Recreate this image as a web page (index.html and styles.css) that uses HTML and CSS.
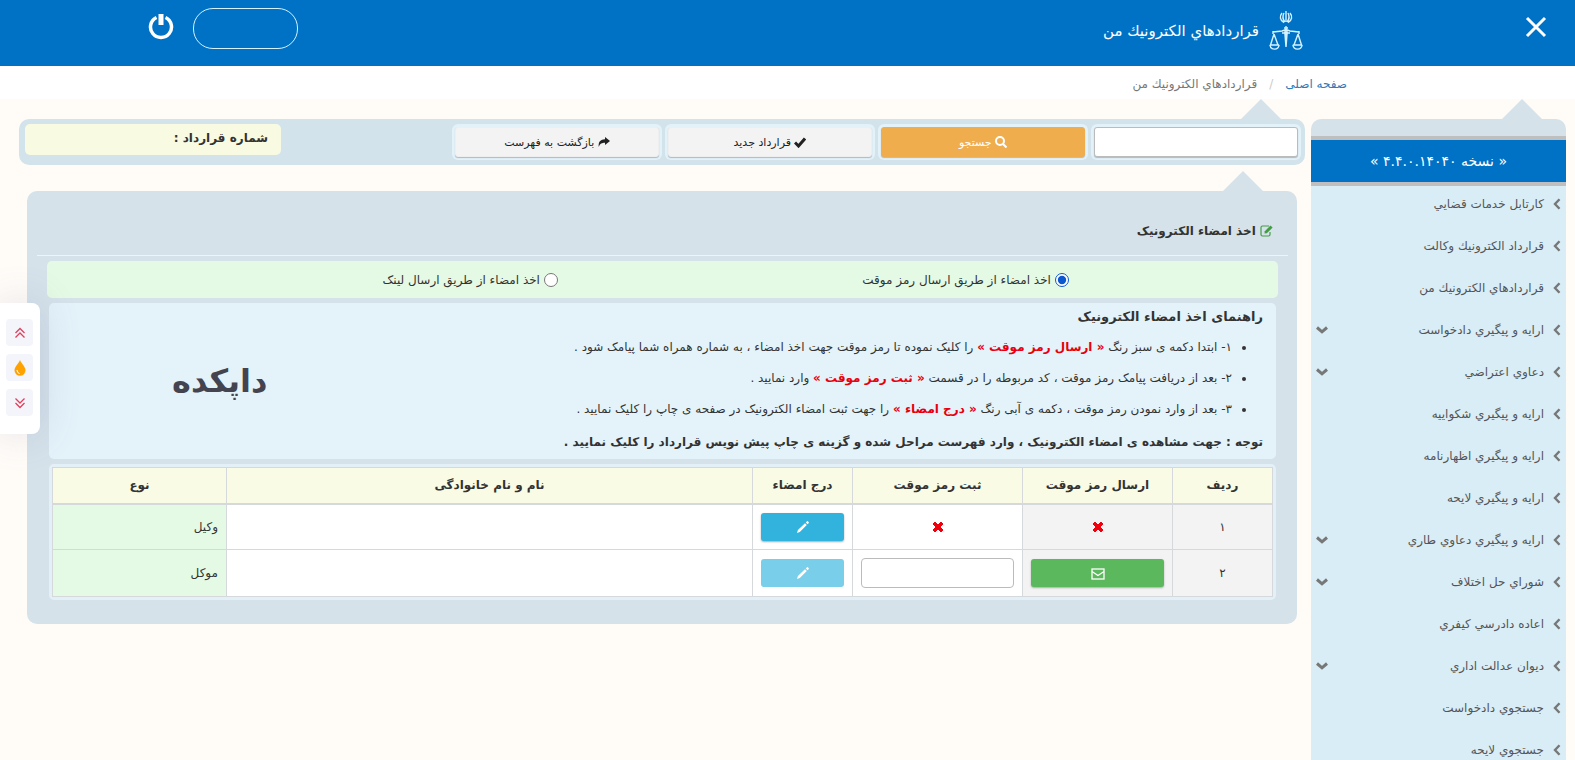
FILE: index.html
```html
<!DOCTYPE html>
<html lang="fa" dir="rtl">
<head>
    <meta charset="UTF-8">
    <meta name="viewport" content="width=device-width, initial-scale=1.0">
    <title>قراردادهاي الكترونيك من</title>
    <link rel="stylesheet" href="styles.css">
</head>
<body>
    <svg class="sprite" aria-hidden="true">
        <symbol id="chevron" viewBox="0 0 8 12"><path d="M6.5 1.2L2 6l4.5 4.8" fill="none" stroke="currentColor" stroke-width="2.4"/></symbol>
        <symbol id="arrow-down" viewBox="0 0 12 8"><path d="M1 1.5l5 4.3 5-4.3" fill="none" stroke="currentColor" stroke-width="3"/></symbol>
        <symbol id="times" viewBox="0 0 12 12"><path d="M3 1L6 4l3-3 2 2-3 3 3 3-2 2-3-3-3 3-2-2 3-3-3-3z" fill="currentColor" stroke="currentColor" stroke-width="1" stroke-linejoin="round"/></symbol>
        <symbol id="pencil" viewBox="0 0 14 14"><path d="M1 13l.9-3L9 3.200 10.800 5l-7 7.100zM9.800 2.400l1-1c.4-.4.8-.4 1.200 0l.6.6c.4.4.4.8 0 1.200l-1 1z" fill="currentColor"/></symbol>
    </svg>

    <header class="topbar">
        <button class="icon-btn close-menu" type="button" aria-label="بستن منو">
            <svg width="22" height="22" viewBox="0 0 22 22"><path d="M2 2l18 18M20 2L2 20" stroke="#fff" stroke-width="3"/></svg>
        </button>
        <div class="brand">
            <svg width="34" height="40" viewBox="0 0 34 40" fill="none" stroke="#d5f2ff" stroke-width="1.4">
                <path d="M17 0v11M15 2c-1.6 3-1.5 6 .8 9M19 2c1.6 3 1.5 6-.8 9M13 2c-2.600 3-2.200 7.500 2 9.500M21 2c2.600 3 2.200 7.500-2 9.500"/>
                <path d="M15.800 21h2.400L17 36z" fill="#d5f2ff"/>
                <path d="M17 15v8M15 17h4M4 21l9-1 4-1.500 4 1.500 9 1M4 20v3M30 20v3M13 22h8"/>
                <path d="M5 23L1.500 34M5 23l4 11M29 23l-4 11M29 23l3.500 11M.8 34h9.400M23.800 34h9.400"/>
                <path d="M1 34c.5 5.500 8.500 5.500 9 0M24 34c.5 5.500 8.500 5.500 9 0"/>
            </svg>
            <h1>قراردادهاي الكترونيك من</h1>
        </div>
        <div class="account">
            <div class="user-box"></div>
            <button class="icon-btn" type="button" aria-label="خروج">
                <svg width="26" height="26" viewBox="0 0 26 26" fill="none" stroke="#fff"><path d="M8.500 3.500a10.500 10.500 0 1 0 9 0" stroke-width="3.500"/><path d="M13 0v11" stroke-width="5"/></svg>
            </button>
        </div>
    </header>

    <nav class="breadcrumb">
        <a href="#">صفحه اصلی</a>
        <span class="sep">/</span>
        <span>قراردادهاي الكترونيك من</span>
    </nav>

    <div class="page">
        <aside class="sidebar pointer">
            <p class="version">« نسخه ۴.۴.۰.۱۴۰۴۰ »</p>
            <ul class="menu">
                <li><a href="#"><svg class="chev"><use href="#chevron"/></svg>كارتابل خدمات قضايي</a></li>
                <li><a href="#"><svg class="chev"><use href="#chevron"/></svg>قرارداد الكترونيك وكالت</a></li>
                <li><a href="#"><svg class="chev"><use href="#chevron"/></svg>قراردادهاي الكترونيك من</a></li>
                <li><a href="#"><svg class="chev"><use href="#chevron"/></svg>ارايه و پيگيري دادخواست<svg class="down"><use href="#arrow-down"/></svg></a></li>
                <li><a href="#"><svg class="chev"><use href="#chevron"/></svg>دعاوي اعتراضي<svg class="down"><use href="#arrow-down"/></svg></a></li>
                <li><a href="#"><svg class="chev"><use href="#chevron"/></svg>ارايه و پيگيري شكواييه</a></li>
                <li><a href="#"><svg class="chev"><use href="#chevron"/></svg>ارايه و پيگيري اظهارنامه</a></li>
                <li><a href="#"><svg class="chev"><use href="#chevron"/></svg>ارايه و پيگيري لايحه</a></li>
                <li><a href="#"><svg class="chev"><use href="#chevron"/></svg>ارايه و پيگيري دعاوي طاري<svg class="down"><use href="#arrow-down"/></svg></a></li>
                <li><a href="#"><svg class="chev"><use href="#chevron"/></svg>شوراي حل اختلاف<svg class="down"><use href="#arrow-down"/></svg></a></li>
                <li><a href="#"><svg class="chev"><use href="#chevron"/></svg>اعاده دادرسي كيفري</a></li>
                <li><a href="#"><svg class="chev"><use href="#chevron"/></svg>ديوان عدالت اداري<svg class="down"><use href="#arrow-down"/></svg></a></li>
                <li><a href="#"><svg class="chev"><use href="#chevron"/></svg>جستجوي دادخواست</a></li>
                <li><a href="#"><svg class="chev"><use href="#chevron"/></svg>جستجوي لايحه</a></li>
            </ul>
        </aside>

        <main>
            <form class="toolbar pointer">
                <input class="tool" type="text" aria-label="شماره قرارداد">
                <button class="tool search" type="button">
                    <svg width="12" height="12" viewBox="0 0 12 12" fill="none" stroke="currentColor" stroke-width="2"><circle cx="5" cy="5" r="4"/><path d="M8 8l3.500 3.500"/></svg>
                    جستجو
                </button>
                <button class="tool" type="button">
                    <svg width="12" height="12" viewBox="0 0 12 12"><path d="M1 6.500l3.500 3.500L11 2.500" fill="none" stroke="currentColor" stroke-width="3"/></svg>
                    قرارداد جدید
                </button>
                <button class="tool" type="button">
                    <svg width="12" height="12" viewBox="0 0 12 12"><path d="M7 1l5 4-5 4V6.800C4 6.800 2 7.500.8 11 0 6 2.500 3.400 7 3.300z" fill="currentColor"/></svg>
                    بازگشت به فهرست
                </button>
                <p class="contract-no">شماره قرارداد :</p>
            </form>

            <section class="panel pointer">
                <h2>
                    <svg width="13" height="12" viewBox="0 0 13 12"><path d="M9 1H2.500Q1 1 1 2.500v7Q1 11 2.500 11h6Q10 11 10 9.500V7" fill="none" stroke="#449d44" stroke-width="1.200"/><path d="M4.500 8.500l.3-2.200L10.500.6 12.600 2.600 6.800 8.300z" fill="#449d44"/></svg>
                    اخذ امضاء الکترونیک
                </h2>

                <div class="methods">
                    <label><input type="radio" name="method" checked>اخذ امضاء از طریق ارسال رمز موقت</label>
                    <label><input type="radio" name="method">اخذ امضاء از طریق ارسال لینک</label>
                </div>

                <div class="guide">
                    <div>
                        <h3>راهنمای اخذ امضاء الکترونیک</h3>
                        <ul>
                            <li>۱- ابتدا دکمه ی سبز رنگ <strong>« ارسال رمز موقت »</strong> را کلیک نموده تا رمز موقت جهت اخذ امضاء ، به شماره همراه شما پیامک شود .</li>
                            <li>۲- بعد از دریافت پیامک رمز موقت ، کد مربوطه را در قسمت <strong>« ثبت رمز موقت »</strong> وارد نمایید .</li>
                            <li>۳- بعد از وارد نمودن رمز موقت ، دکمه ی آبی رنگ <strong>« درج امضاء »</strong> را جهت ثبت امضاء الکترونیک در صفحه ی چاپ را کلیک نمایید .</li>
                        </ul>
                        <p class="note">توجه : جهت مشاهده ی امضاء الکترونیک ، وارد فهرست مراحل شده و گزینه ی چاپ پیش نویس قرارداد را کلیک نمایید .</p>
                    </div>
                    <div class="watermark">داپکده</div>
                </div>

                <div class="table-box">
                    <table>
                        <thead>
                            <tr>
                                <th class="col-row">ردیف</th>
                                <th class="col-send">ارسال رمز موقت</th>
                                <th class="col-code">ثبت رمز موقت</th>
                                <th class="col-sign">درج امضاء</th>
                                <th>نام و نام خانوادگی</th>
                                <th class="col-type">نوع</th>
                            </tr>
                        </thead>
                        <tbody>
                            <tr>
                                <td class="gray">۱</td>
                                <td class="gray"><svg class="times"><use href="#times"/></svg></td>
                                <td><svg class="times"><use href="#times"/></svg></td>
                                <td><button class="btn btn-info" type="button" aria-label="درج امضاء"><svg class="pencil"><use href="#pencil"/></svg></button></td>
                                <td></td>
                                <td class="type">وکیل</td>
                            </tr>
                            <tr>
                                <td class="gray">۲</td>
                                <td class="gray"><button class="btn btn-success" type="button" aria-label="ارسال رمز موقت"><svg width="14" height="12" viewBox="0 0 14 12" fill="none" stroke="#fff" stroke-width="1.300"><rect x="1" y="1" width="12" height="10"/><path d="M1 3.500l6 4 6-4"/></svg></button></td>
                                <td><input class="code" type="text" aria-label="ثبت رمز موقت"></td>
                                <td><button class="btn btn-info" type="button" aria-label="درج امضاء" disabled><svg class="pencil"><use href="#pencil"/></svg></button></td>
                                <td></td>
                                <td class="type">موکل</td>
                            </tr>
                        </tbody>
                    </table>
                </div>
            </section>
        </main>
    </div>

    <div class="float-tools">
        <button type="button" aria-label="بالا"><svg width="12" height="12" viewBox="0 0 12 12" fill="none" stroke="#e0405e" stroke-width="1.300"><path d="M1.500 6L6 1.500 10.500 6M1.500 10.500L6 6l4.500 4.500"/></svg></button>
        <button type="button" aria-label="رنگ"><svg width="12" height="16" viewBox="0 0 12 16"><path d="M6 0c1.500 4 5.500 6.500 5.500 10.300a5.500 5.500 0 0 1-11 0C.5 6.500 4.500 4 6 0z" fill="#ffa200"/><path d="M3 10q0 3 2.500 3.500" fill="none" stroke="#fff" stroke-width="1"/></svg></button>
        <button type="button" aria-label="پایین"><svg width="12" height="12" viewBox="0 0 12 12" fill="none" stroke="#e0405e" stroke-width="1.300"><path d="M1.500 1.500L6 6l4.500-4.500M1.500 6L6 10.500 10.500 6"/></svg></button>
    </div>
</body>
</html>
```
FILE: styles.css
```css
* {
    box-sizing: border-box;
}

body {
    margin: 0;
    background: #fffcf8;
    color: #333;
    font-family: "DejaVu Sans", sans-serif;
    font-size: 12px;
    line-height: 20px;
}

h1, h2, h3, p, ul {
    margin: 0;
    padding: 0;
}

a {
    text-decoration: none;
}

button, input {
    font-family: inherit;
    font-size: inherit;
}

.sprite {
    display: none;
}

/* top bar */
.topbar {
    display: flex;
    align-items: flex-start;
    height: 66px;
    padding: 8px 28px 0 148px;
    background: #0072c6;
    color: #fff;
}

.icon-btn {
    padding: 0;
    border: 0;
    background: none;
    cursor: pointer;
}

.icon-btn svg {
    display: block;
}

.close-menu {
    margin-top: 8px;
}

.brand {
    display: flex;
    align-items: center;
    gap: 10px;
    margin-top: 3px;
    margin-right: 222px;
}

.brand h1 {
    font-size: 15px;
    font-weight: normal;
}

.account {
    display: flex;
    gap: 19px;
    margin-right: auto;
}

.account .icon-btn {
    align-self: flex-start;
    margin-top: 6px;
}

.user-box {
    width: 105px;
    height: 41px;
    border: 1px solid #d5f2ff;
    border-radius: 20px;
}

.breadcrumb {
    display: flex;
    gap: 12px;
    height: 33px;
    padding: 8px 228px 0 0;
    background: #fff;
    color: #777;
}

.breadcrumb a {
    color: #337ab7;
}

.breadcrumb .sep {
    color: #ccc;
}

.page {
    display: flex;
    align-items: flex-start;
    gap: 6px;
    padding: 20px 9px 0 19px;
}

/* little triangle above the boxes */
.pointer {
    position: relative;
}

.pointer::before {
    content: "";
    position: absolute;
    top: -20px;
    right: 24px;
    border: 20px solid transparent;
    border-top: 0;
    border-bottom-color: #d5e2ea;
}

/* sidebar */
.sidebar {
    flex: 0 0 255px;
    padding-top: 17px;
    border-radius: 10px 10px 0 0;
    background: #d5e2ea;
}

.version {
    border: solid #bfbfbf;
    border-width: 4px 0;
    background: #0072c6;
    color: #fff;
    font-size: 14px;
    line-height: 42px;
    text-align: center;
}

.menu {
    list-style: none;
    background: #d9edf7;
}

.menu a {
    display: flex;
    align-items: center;
    height: 42px;
    padding: 0 5px 6px;
    color: #555;
}

.menu svg {
    color: #777;
}

.chev {
    width: 8px;
    height: 12px;
    margin-left: 9px;
}

.down {
    width: 12px;
    height: 8px;
    margin-right: auto;
}

/* toolbar */
main {
    flex: 1;
    min-width: 0;
}

.toolbar {
    display: flex;
    gap: 9px;
    height: 46px;
    padding: 8px 7px 8px 6px;
    border-radius: 10px;
    background: #d3e3eb;
}

.tool {
    flex: 0 1 204px;
    min-width: 0;
    height: 30px;
    padding: 0;
    border: 1px solid #eee;
    border-radius: 3px;
    background: #f3f3f3;
    box-shadow: 0 1px 1px #a9bcc6, 0 0 0 3px #e3f1f9;
    color: #222;
    font-size: 11px;
}

input.tool {
    border-color: #bbb;
    background: #fff;
}

.tool.search {
    border-color: #f0ad4e;
    background: #f0ad4e;
    color: #fff;
}

.tool svg, h2 svg {
    vertical-align: -2px;
}

.contract-no {
    flex: 0 0 256px;
    height: 31px;
    margin: -3px auto 0 0;
    padding: 0 13px;
    border-radius: 5px;
    background: #f8fbe2;
    font-weight: bold;
    line-height: 28px;
}

/* signature panel */
.panel {
    margin: 26px 8px 0;
    padding: 28px 20px 24px;
    border-radius: 10px;
    background: #d5e2ea;
}

.panel::before {
    right: 34px;
}

.panel h2 {
    margin: 0 -11px 5px -10px;
    padding: 2px 15px 14px;
    border-bottom: 1px solid #eef4f7;
    font-size: 12px;
}

.methods {
    display: flex;
    margin-right: -1px;
    padding: 1px 17% 0 0;
    border-radius: 5px;
    background: #e4fae4;
    line-height: 36px;
}

.methods label {
    display: flex;
    align-items: center;
    gap: 4px;
    flex: 0 0 50%;
}

.methods input {
    width: 14px;
    height: 14px;
    margin: 0;
    accent-color: #0b57d0;
}

.guide {
    display: flex;
    justify-content: space-between;
    margin: 5px 1px 5px 2px;
    padding: 2px 13px 3px 123px;
    border-radius: 5px;
    background: #e4f3fa;
}

.guide h3 {
    font-size: 13px;
    line-height: 24px;
}

.guide ul {
    margin: 3px 0;
    padding-right: 31px;
}

.guide li {
    line-height: 31px;
}

.guide strong {
    color: #e8000d;
}

.note {
    font-weight: bold;
    line-height: 28px;
}

.watermark {
    align-self: center;
    color: #444450;
    font-size: 32px;
    font-weight: bold;
    line-height: 40px;
}

.table-box {
    margin: 0 1px 0 2px;
    padding: 3px;
    border-radius: 5px;
    background: #e4f0f8;
}

table {
    width: 100%;
    border-collapse: collapse;
    table-layout: fixed;
    background: #fff;
}

th, td {
    padding: 0 8px;
    border: 1px solid #d5d9dc;
    text-align: center;
}

th {
    height: 36px;
    border-bottom-width: 2px;
    background: #f9fbe5;
}

td {
    height: 46px;
}

tbody tr:last-child td {
    height: 47px;
}

.col-row { width: 100px; }
.col-send { width: 150px; }
.col-code { width: 170px; }
.col-sign { width: 100px; }
.col-type { width: 174px; }

.gray {
    background: #f3f3f3;
}

td.type {
    background: #e4fae4;
    text-align: right;
}

td svg {
    vertical-align: middle;
}

.times {
    width: 12px;
    height: 12px;
    color: #f0000d;
}

.pencil {
    width: 14px;
    height: 14px;
}

.btn {
    display: block;
    width: 100%;
    height: 28px;
    padding: 0;
    border: 0;
    border-radius: 3px;
    box-shadow: 0 1px 2px #aaa;
    color: #fff;
}

.btn-info {
    background: #31b3dd;
}

.btn-info:disabled {
    background: #79cfea;
    box-shadow: none;
}

.btn-success {
    background: #5cb85c;
}

.code {
    display: block;
    width: 100%;
    height: 30px;
    border: 1px solid #bbb;
    border-radius: 4px;
}

/* floating buttons on the left edge */
.float-tools {
    position: fixed;
    top: 303px;
    left: 0;
    display: flex;
    flex-direction: column;
    gap: 8px;
    padding: 16px 7px 18px 6px;
    border-radius: 0 8px 8px 0;
    background: #fff;
    box-shadow: 0 0 40px rgba(100, 100, 150, 0.2);
}

.float-tools button {
    display: flex;
    align-items: center;
    justify-content: center;
    width: 27px;
    height: 27px;
    padding: 0;
    border: 0;
    border-radius: 4px;
    background: #f3f5fa;
}
```
